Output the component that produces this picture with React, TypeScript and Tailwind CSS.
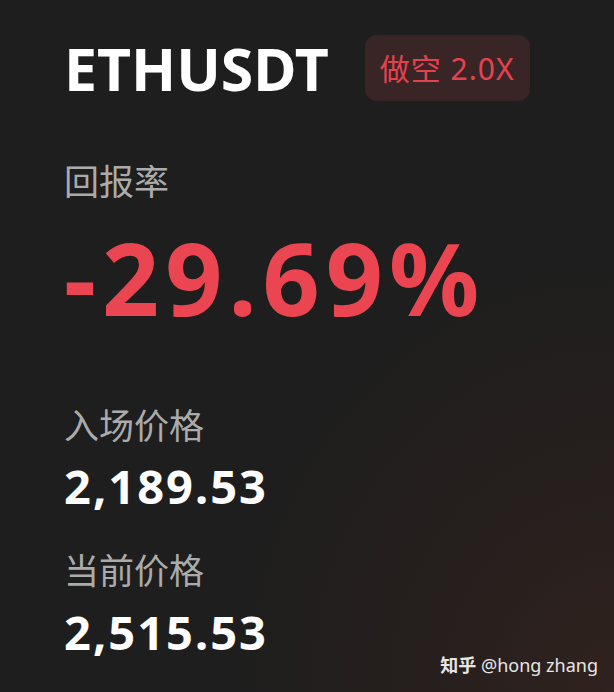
import React from 'react';

const font = { fontFamily: '"Noto Sans", "Noto Sans CJK SC", sans-serif' };

export default function App() {
  return (
    <div
      className="relative w-[614px] h-[692px] overflow-hidden bg-[#1e1e1e] bg-[radial-gradient(ellipse_at_100%_100%,#30221e_0%,#261f1d_22%,#1e1e1e_45%)] pl-[64px] pt-[35px]"
      style={font}
    >
      {/* header: symbol + direction badge */}
      <div className="flex items-center gap-[36px]">
        <div className="text-[59px] leading-[62px] font-bold text-white">ETHUSDT</div>
        <div className="h-[66px] px-[15px] flex items-center rounded-[12px] bg-[#392426] text-[#e4434e] text-[30px] tracking-[1px]">
          做空 2.0X
        </div>
      </div>

      <div className="mt-[64px] text-[35px] leading-[34px] text-[#ababab]">回报率</div>
      <div className="mt-[28px] text-[100px] leading-[100px] font-bold text-[#ec4552] tracking-[6px]">-29.69%</div>

      <div className="mt-[82px] text-[35px] leading-[34px] text-[#ababab]">入场价格</div>
      <div className="mt-[20px] text-[47px] leading-[47px] font-bold text-white tracking-[2px]">2,189.53</div>

      <div className="mt-[44px] text-[35px] leading-[34px] text-[#ababab]">当前价格</div>
      <div className="mt-[21px] text-[47px] leading-[47px] font-bold text-white tracking-[2px]">2,515.53</div>

      {/* watermark */}
      <div className="absolute right-[16px] bottom-[16px] text-[18px] leading-[22px] text-[#e6e6e6]">
        <span className="font-bold">知乎</span> @hong zhang
      </div>
    </div>
  );
}
